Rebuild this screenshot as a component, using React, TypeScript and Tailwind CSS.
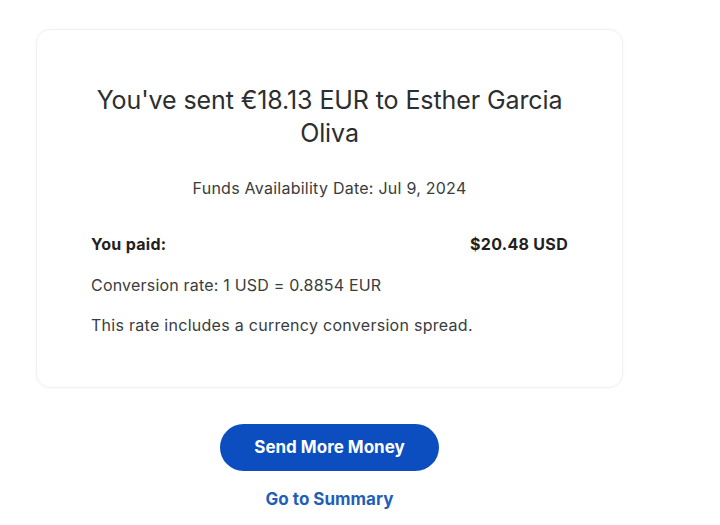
import React from "react";

export default function App() {
  return (
    <div className="w-[720px] h-[525px] bg-white overflow-hidden" style={{ fontFamily: "Inter, 'Liberation Sans', sans-serif" }}>
      <div className="pl-[36px] pt-[29px]">
        <div className="w-[587px] h-[359px] rounded-[14px] border border-[#f0f0f0] shadow-[0_0_3px_rgba(0,0,0,0.04)] px-[54px] flex flex-col">
          <h1 className="mt-[54px] text-center text-[25px] leading-[33px] text-[#2c2e2f] tracking-[-0.1px]">
            You've sent €18.13 EUR to Esther Garcia Oliva
          </h1>
          <p className="mt-[28px] text-center text-[16px] leading-[20px] text-[#3a3c3e] tracking-[0.25px]">
            Funds Availability Date: Jul 9, 2024
          </p>
          <div className="mt-[36px] flex justify-between text-[16px] leading-[20px] font-bold text-[#1f2122] tracking-[0.3px]">
            <span>You paid:</span>
            <span>$20.48 USD</span>
          </div>
          <p className="mt-[21px] text-[16px] leading-[20px] text-[#3a3c3e] tracking-[0.2px]">Conversion rate: 1 USD = 0.8854 EUR</p>
          <p className="mt-[20px] text-[16px] leading-[20px] text-[#3a3c3e] tracking-[0.28px]">This rate includes a currency conversion spread.</p>
        </div>
      </div>
      <div className="w-[659px] flex flex-col items-center">
        <button className="mt-[36px] w-[219px] h-[47px] rounded-full bg-[#0c4dbf] text-white text-[17px] font-bold">
          Send More Money
        </button>
        <a className="mt-[18px] text-[17px] leading-[20px] font-bold text-[#1f5fb8]">Go to Summary</a>
      </div>
    </div>
  );
}
